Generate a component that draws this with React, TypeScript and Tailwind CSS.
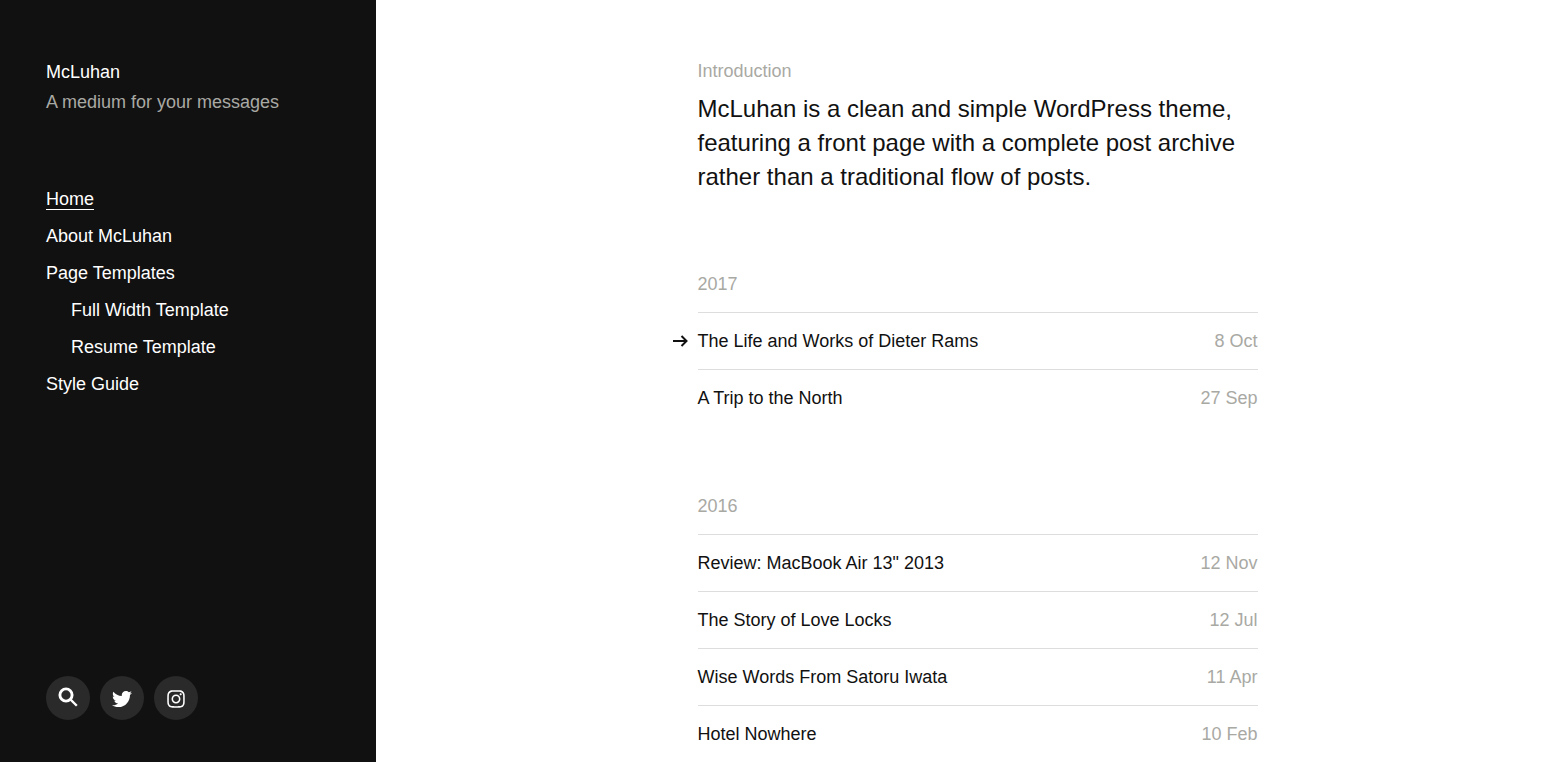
import { FaInstagram, FaTwitter } from 'react-icons/fa'

const archive = [
  {
    year: '2017',
    top: 'mt-[75px]',
    posts: [
      { title: 'The Life and Works of Dieter Rams', date: '8 Oct', hovered: true },
      { title: 'A Trip to the North', date: '27 Sep' },
    ],
  },
  {
    year: '2016',
    top: 'mt-[65px]',
    posts: [
      { title: 'Review: MacBook Air 13" 2013', date: '12 Nov' },
      { title: 'The Story of Love Locks', date: '12 Jul' },
      { title: 'Wise Words From Satoru Iwata', date: '11 Apr' },
      { title: 'Hotel Nowhere', date: '10 Feb' },
    ],
  },
]

export default function App() {
  return (
    <div className="flex h-[762px] overflow-hidden bg-white font-['Liberation_Sans',sans-serif] text-[18px]">
      <aside className="flex w-[376px] shrink-0 flex-col justify-between bg-[#111] px-[46px] pt-[57px] pb-[42px] text-white">
        <div>
          <div className="leading-[30px]">McLuhan</div>
          <div className="leading-[30px] text-[#a9a9a4]">A medium for your messages</div>
          <nav className="mt-[69px] flex flex-col gap-[10px] leading-[27px]">
            <div><span className="border-b border-white">Home</span></div>
            <div>About McLuhan</div>
            <div>Page Templates</div>
            <div className="pl-[25px]">Full Width Template</div>
            <div className="pl-[25px]">Resume Template</div>
            <div>Style Guide</div>
          </nav>
        </div>
        <div className="flex gap-[10px]">
          <div className="flex size-11 items-center justify-center rounded-full bg-[#2a2a2a]">
            <svg viewBox="0 0 20 20" className="mb-[3px] size-5" fill="none" stroke="currentColor">
              <circle cx="8" cy="8" r="6.1" strokeWidth="2.9" />
              <path d="M12.4 12.4 18.8 18.8" strokeWidth="2.3" />
            </svg>
          </div>
          <div className="flex size-11 items-center justify-center rounded-full bg-[#2a2a2a]"><FaTwitter className="mt-[2px] size-5" /></div>
          <div className="flex size-11 items-center justify-center rounded-full bg-[#2a2a2a]"><FaInstagram className="mt-[2px] size-5" /></div>
        </div>
      </aside>
      <main className="ml-[321.5px] w-[560px] pt-[56px] text-[#111]">
        <div className="leading-[30px] text-[#a9a9a4]">Introduction</div>
        <p className="mt-[6px] text-[24px] leading-[34px]">
          McLuhan is a clean and simple WordPress theme, featuring a front page with a complete post archive rather than a traditional flow of posts.
        </p>
        {archive.map((group) => (
          <section key={group.year} className={group.top}>
            <div className="pb-[13px] leading-[30px] text-[#a9a9a4]">{group.year}</div>
            {group.posts.map((post) => (
              <div key={post.title} className="relative flex h-[57px] items-center justify-between border-t border-[#ddd]">
                {post.hovered && (
                  <svg viewBox="0 0 15 12" className="absolute left-[-25px] h-3 w-[15px]" fill="none" stroke="#111" strokeWidth="2">
                    <path d="M0 6H13.5M8.5 1 13.5 6 8.5 11" />
                  </svg>
                )}
                <span>{post.title}</span>
                <span className="text-[#a9a9a4]">{post.date}</span>
              </div>
            ))}
          </section>
        ))}
      </main>
    </div>
  )
}
